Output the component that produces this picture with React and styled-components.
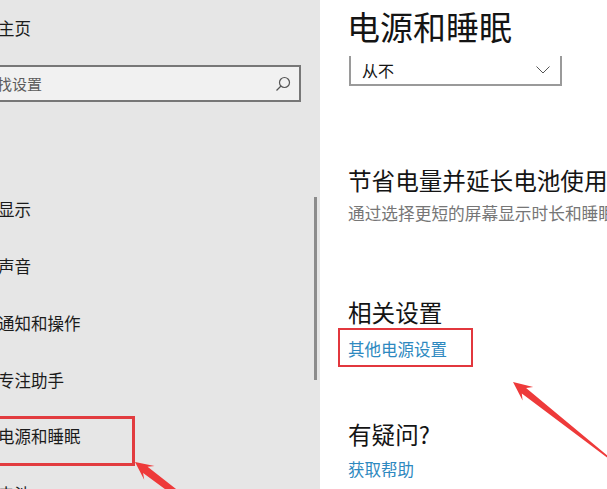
import React from 'react'
import styled, { createGlobalStyle } from 'styled-components'

const GlobalStyle = createGlobalStyle`
  html, body {
    margin: 0;
    padding: 0;
    background: #fff;
  }
  body {
    font-family: "Noto Sans CJK SC", "Noto Sans", sans-serif;
    overflow: hidden;
  }
`

const Page = styled.div`
  position: relative;
  display: grid;
  grid-template-columns: 320px 1fr;
  width: 607px;
  height: 489px;
  overflow: hidden;
`

const Sidebar = styled.aside`
  position: relative;
  background: #e6e6e6;
  color: #1b1b1b;
  overflow: hidden;
  white-space: nowrap;
`

const HomeRow = styled.div`
  height: 56px;
  display: flex;
  align-items: center;
  margin-left: -2px;
  font-size: 16.5px;
`

const SearchBox = styled.div`
  box-sizing: border-box;
  width: 341px;
  height: 37px;
  margin: 9px 0 0 -40px;
  padding: 0 8px 0 20px;
  border: 2px solid #777;
  background: #f1f1f1;
  display: flex;
  align-items: center;
  justify-content: space-between;
`

const Placeholder = styled.span`
  font-size: 15px;
  color: #5c5c5c;
`

const NavList = styled.nav`
  margin-top: 78px;
`

const NavItem = styled.div`
  height: 57px;
  display: flex;
  align-items: ${p => (p.$boxed ? 'flex-end' : 'center')};
  font-size: 16.5px;
`

const NavLabel = styled.span`
  margin-left: -2px;
  line-height: 22px;
`

const MarkedItem = styled.div`
  box-sizing: border-box;
  width: 147px;
  height: 50px;
  margin: 0 0 -1px -12px;
  padding: 6px 0 0 7px;
  border: 3px solid #e23c3f;
  line-height: 22px;
`

const Scrollbar = styled.div`
  position: absolute;
  left: 314px;
  top: 197px;
  width: 2.5px;
  height: 183px;
  background: #8c8c8c;
`

const Main = styled.main`
  background: #fff;
  padding-left: 28px;
  overflow: hidden;
  white-space: nowrap;
  color: #141414;
`

const PageTitle = styled.h1`
  margin: 0 0 0 -1px;
  height: 52px;
  line-height: 52px;
  font-size: 33px;
  font-weight: 400;
`

const Dropdown = styled.div`
  box-sizing: border-box;
  width: 213px;
  height: 30px;
  margin: 4px 0 0 1px;
  padding: 0 10px 0 11px;
  border: 2px solid #9a9a9a;
  border-top: none;
  display: flex;
  align-items: center;
  justify-content: space-between;
  font-size: 16px;
`

const SectionTitle = styled.h2`
  margin: ${p => p.$top}px 0 0;
  font-size: 23.6px;
  font-weight: 400;
  line-height: 30px;
`

const Description = styled.p`
  margin: 6px 0 0;
  font-size: 16.7px;
  line-height: 24px;
  color: #767676;
`

const Link = styled.a`
  display: block;
  font-size: 16.5px;
  line-height: 24px;
  color: #2e89c0;
  text-decoration: none;
  margin-top: ${p => p.$top || 0}px;
`

const LinkMark = styled.div`
  box-sizing: border-box;
  width: 135px;
  margin: 1px 0 0 -10px;
  padding: 7px 8px 4px;
  border: 2px solid #e2373d;
`

const Overlay = styled.svg`
  position: absolute;
  left: 0;
  top: 0;
  pointer-events: none;
`

function arrowPoints(tip, tail, head, wing, base, end) {
  const dx = tail[0] - tip[0]
  const dy = tail[1] - tip[1]
  const len = Math.hypot(dx, dy)
  const ux = dx / len
  const uy = dy / len
  const nx = -uy
  const ny = ux
  const p = (d, w) => [tip[0] + ux * d + nx * w, tip[1] + uy * d + ny * w]
  const pts = [
    tip,
    p(head, wing),
    p(head - 5, base),
    [tail[0] + nx * end, tail[1] + ny * end],
    [tail[0] - nx * end, tail[1] - ny * end],
    p(head - 5, -base),
    p(head, -wing),
  ]
  return pts.map(q => q.map(v => v.toFixed(1)).join(',')).join(' ')
}

const SearchIcon = () => (
  <svg width="16" height="16" viewBox="0 0 16 16">
    <circle cx="9.5" cy="6.5" r="5" fill="none" stroke="#555" strokeWidth="1.2" />
    <line x1="6" y1="10" x2="1.5" y2="14.5" stroke="#555" strokeWidth="1.3" />
  </svg>
)

const Chevron = () => (
  <svg width="14" height="8" viewBox="0 0 14 8">
    <polyline points="0.5,0.5 7,7 13.5,0.5" fill="none" stroke="#555" strokeWidth="1" />
  </svg>
)

const navItems = ['显示', '声音', '通知和操作', '专注助手', '电源和睡眠', '电池']

export default function App() {
  return (
    <>
      <GlobalStyle />
      <Page>
        <Sidebar>
          <HomeRow>主页</HomeRow>
          <SearchBox>
            <Placeholder>查找设置</Placeholder>
            <SearchIcon />
          </SearchBox>
          <NavList>
            {navItems.map(item =>
              item === '电源和睡眠' ? (
                <NavItem key={item} $boxed>
                  <MarkedItem>{item}</MarkedItem>
                </NavItem>
              ) : (
                <NavItem key={item}>
                  <NavLabel>{item}</NavLabel>
                </NavItem>
              )
            )}
          </NavList>
          <Scrollbar />
        </Sidebar>

        <Main>
          <PageTitle>电源和睡眠</PageTitle>
          <Dropdown>
            <span>从不</span>
            <Chevron />
          </Dropdown>

          <SectionTitle $top={79}>节省电量并延长电池使用时间</SectionTitle>
          <Description>通过选择更短的屏幕显示时长和睡眠时间来节省电量。</Description>

          <SectionTitle $top={72}>相关设置</SectionTitle>
          <LinkMark>
            <Link>其他电源设置</Link>
          </LinkMark>

          <SectionTitle $top={52}>有疑问?</SectionTitle>
          <Link $top={8}>获取帮助</Link>
        </Main>

        <Overlay width="607" height="489">
          <polygon fill="#ee3a3a" points={arrowPoints([135, 462], [185, 500], 18, 8.5, 3.8, 3.2)} />
          <polygon fill="#ee3a3a" points={arrowPoints([513, 382], [614, 462], 19, 8.5, 3.5, 0.6)} />
        </Overlay>
      </Page>
    </>
  )
}
